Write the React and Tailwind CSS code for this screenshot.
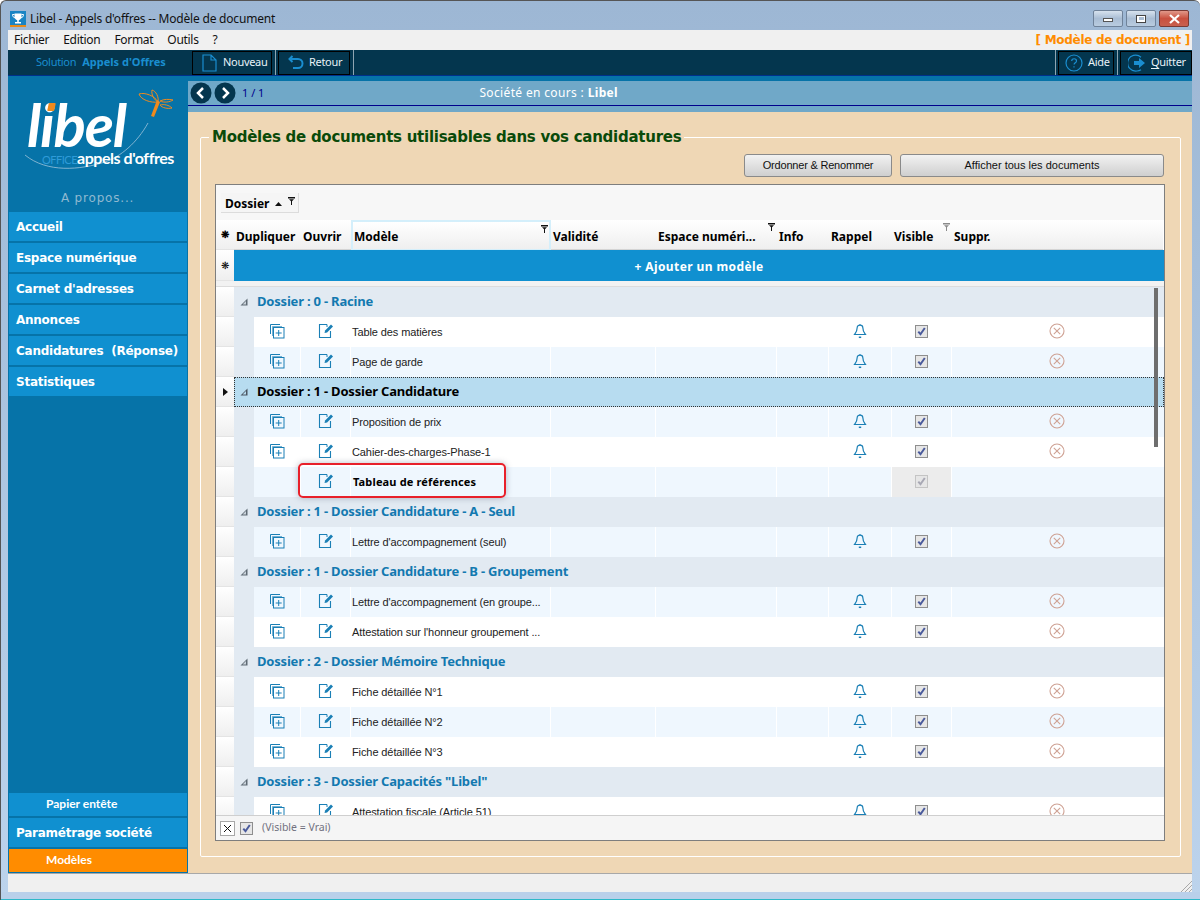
import React from "react";

const blue = "#1a7fb5";

const DupIcon = () => (
  <svg width="16" height="16" viewBox="0 0 16 16" fill="none" stroke={blue} strokeWidth="1">
    <path d="M1.500 11V1.500H11" />
    <path d="M3.500 13V3.500H13" opacity=".6" />
    <rect x="4.500" y="4.500" width="10.500" height="10.500" fill="#fff" fillOpacity="0" />
    <path d="M9.700 7v6M6.700 10h6" />
  </svg>
);
const EditIcon = () => (
  <svg width="16" height="16" viewBox="0 0 16 16" fill="none">
    <path d="M9 1.500H1.500v13h11V8" stroke={blue} strokeWidth="1.100" />
    <path d="M9 1.500v2.500" stroke={blue} strokeWidth="1" />
    <path d="M6.500 10l.6-2.600L13 1.500l2 2-5.900 5.900z" fill={blue} />
  </svg>
);
const BellIcon = () => (
  <svg width="14" height="16" viewBox="0 0 14 16" fill="none" stroke={blue} strokeWidth="1.200">
    <path d="M7 1v1.200M4.200 4.500C4.200 3 5.400 2.200 7 2.200s2.800.8 2.800 2.300c0 3.400.8 4.800 2.600 7H1.600c1.800-2.200 2.600-3.600 2.600-7z" />
    <path d="M5.800 14.300h2.400" strokeWidth="1.500" />
  </svg>
);
const Check = ({ dim }) => (
  <span className={`flex h-[13px] w-[13px] items-center justify-center border bg-[#e6e6e6] ${dim ? "border-[#c4c4c4]" : "border-[#8e8e8e]"}`}>
    <svg width="9" height="9" viewBox="0 0 9 9" fill="none" stroke={dim ? "#a8a8b4" : "#4a5a9c"} strokeWidth="2">
      <path d="M1.300 4.600l2.200 2.600L7.800 1" />
    </svg>
  </span>
);
const XCircle = () => (
  <svg width="16" height="16" viewBox="0 0 16 16" fill="none" stroke="#cfa294" strokeWidth="1.100">
    <circle cx="8" cy="8" r="7" />
    <path d="M4.800 4.800l6.400 6.400M11.200 4.800l-6.400 6.400" />
  </svg>
);
const Funnel = ({ gray }) => (
  <svg width="7" height="8" viewBox="0 0 7 8" fill={gray ? "#8a8a8a" : "#111"}>
    <path d="M0 0h7v1.500H0zM1 2.200h5L4 4.300V8H3V4.300z" />
  </svg>
);
const Collapse = ({ dark }) => (
  <svg width="8" height="8" viewBox="0 0 8 8">
    <path d="M7.500 0.500v7H.5z" fill={dark ? "#4a5560" : "#5f6a74"} />
    <path d="M6 3v3.400H2.600z" fill={dark ? "#b7dcf0" : "#c9d2da"} />
  </svg>
);

const cols = "grid grid-cols-[47px_50px_200px_105px_121px_52px_63px_60px_211px]";

const Indicator = ({ children, h = "h-[30px]" }) => (
  <div className={`flex w-[18px] shrink-0 items-center justify-center border-b border-[#e4e4e4] bg-linear-to-b from-white to-[#efefef] text-[10px] text-black ${h}`}>
    {children}
  </div>
);

const GroupRow = ({ label, selected }) => (
  <div className="flex h-[30px]">
    <Indicator>
      {selected && (
        <svg width="5" height="8" viewBox="0 0 5 8"><path d="M0 0l5 4-5 4z" fill="#111" /></svg>
      )}
    </Indicator>
    <div
      className={`flex flex-1 items-center gap-[9px] font-['Noto_Sans',sans-serif] text-[13px] font-bold tracking-[-0.2px] ${
        selected
          ? "border border-dotted border-[#333] bg-[#b7dcf0] pl-[5px] text-black"
          : "bg-[#e2eaf2] pl-[6px] text-[#1379b0]"
      }`}
    >
      <Collapse dark={selected} />
      <span>{label}</span>
    </div>
  </div>
);

const DataRow = ({ label, alt, bold, noDup, dim, noBell }) => (
  <div className="flex h-[30px]">
    <Indicator />
    <div className="w-[20px] shrink-0 bg-[#e2eaf2]" />
    <div className={`${cols} flex-1 font-['Liberation_Sans',sans-serif] text-[11px] tracking-[-0.1px] text-[#222] ${alt ? "bg-[#eff7fe]" : "bg-white"}`}>
      <div className="flex items-center justify-center border-r border-white pb-[2px]">{!noDup && <DupIcon />}</div>
      <div className="flex items-center justify-center border-r border-white pb-[2px]"><EditIcon /></div>
      <div className={`flex items-center overflow-hidden whitespace-nowrap border-r border-white ${bold ? "pl-[2px] font-['Noto_Sans',sans-serif] font-bold tracking-[0.15px] text-black" : "pl-[1px]"}`}>{label}</div>
      <div className="border-r border-white" />
      <div className="border-r border-white" />
      <div className="border-r border-white" />
      <div className="flex items-center justify-center border-r border-white pb-[2px]">{!noBell && <BellIcon />}</div>
      <div className={`flex items-center justify-center border-r border-white pb-[1px] ${dim ? "bg-[#ececec]" : ""}`}><Check dim={dim} /></div>
      <div className="flex items-center justify-start pb-[3px] pl-[97px]">{!noBell && <XCircle />}</div>
    </div>
  </div>
);

const HeadCell = ({ children, funnel, gray, active }) => (
  <div className={`relative flex items-center border-b border-[#d4d4d4] bg-linear-to-b from-white to-[#efefef] ${active ? "border-2 border-[#d4effb] pl-[1px] pt-[3px]" : "pl-[2px] pt-[5px]"}`}>
    {children}
    {funnel && (
      <span className={`absolute top-[3px] ${active ? "right-[1px]" : "right-[2px]"}`}><Funnel gray={gray} /></span>
    )}
  </div>
);

const NavItem = ({ children }) => (
  <div className="flex h-[29px] items-center whitespace-pre bg-[#1090d0] pl-[7px] font-['DejaVu_Sans',sans-serif] text-[12px] font-bold tracking-[-0.25px] text-white">
    {children}
  </div>
);

const ToolBtn = ({ icon, children, w, pl = "pl-[8px]", gap = "gap-[6px]" }) => (
  <div className={`flex h-[24px] items-center border border-black bg-[#04364e] font-['Noto_Sans',sans-serif] text-[11px] tracking-[-0.3px] text-[#e8f2f8] ${pl} ${gap} ${w}`}>
    {icon}
    <span>{children}</span>
  </div>
);

const Sep = () => <div className="ml-[1px] h-[25px] w-px bg-[#8fa5b2]" />;

const WinBtn = ({ children, close }) => (
  <div className={`flex h-[17px] w-[30px] items-center justify-center rounded-[2px] border ${close ? "border-[#7a3a34] bg-linear-to-b from-[#e0988a] via-[#c9503f] to-[#c8604f]" : "border-[#6f8299] bg-linear-to-b from-[#d7e2ee] via-[#a9bdd4] to-[#b9cce0]"}`}>
    {children}
  </div>
);

const Logo = () => (
  <div className="relative h-[110px] shrink-0">
    <div className="absolute left-[18px] top-[24px] font-['Lato',sans-serif] text-[60px] font-bold italic leading-[48px] tracking-[-1.200px] text-white">libel</div>
    <div className="absolute left-[39px] top-[27px] h-[8px] w-[7px] -skew-x-12 rounded-[1px] bg-[#ef8a1d]" />
    <svg className="absolute left-[16px] top-[5px]" width="170" height="90" viewBox="0 0 170 90" fill="none">
      <g stroke="#ef8a1d" strokeWidth="1">
        <path d="M114 13c6-2 16 2 19 8-7 1-17-2-19-8z" />
        <path d="M127 9c4 1 7 7 6 12-4-2-7-8-6-12z" />
        <path d="M135 20c4-2 9-2 13-1-3 2-9 3-13 1z" />
        <path d="M135 24c4-1 9 0 12 3-4 1-10 0-12-3z" />
      </g>
      <path d="M132 19l3 2-6 15-3-1z" fill="#ef8a1d" />
      <path d="M123 42C112 62 95 76 80 81 55 89 22 92 0 74" stroke="#9fc4da" strokeWidth=".8" />
    </svg>
    <div className="absolute left-[33px] top-[74px] flex items-baseline whitespace-nowrap font-['Lato',sans-serif] leading-[16px]">
      <span className="text-[11px] tracking-[-0.500px] text-[#2f9bd8]">OFFICE</span>
      <span className="text-[16px] font-bold tracking-[-0.45px] text-white">appels d'offres</span>
    </div>
  </div>
);

export default function App() {
  return (
    <div className="flex h-[900px] w-[1200px] flex-col overflow-hidden rounded-t-[6px] border-l border-t border-[#555] bg-linear-to-b from-[#9db7d4] to-[#bcd3ec] font-['Noto_Sans',sans-serif]">
      {/* title bar */}
      <div className="flex h-[29px] shrink-0 items-center pl-[9px] pr-[11px] pt-[6px]">
        <svg width="16" height="16" viewBox="0 0 16 16" className="mr-[4px]">
          <rect width="16" height="16" fill="#1a84c4" />
          <rect y="14" width="16" height="2" fill="#e88a1a" />
          <path d="M4.500 2.500h7v3c0 2-1.500 3.500-2.700 3.800V11H11v1.500H5V11h2.200V9.300C6 9 4.500 7.500 4.500 5.500z" fill="#fff" />
          <path d="M4.500 3.500H2.500c0 2 1 3 2.500 3.300M11.500 3.500h2c0 2-1 3-2.500 3.300" fill="none" stroke="#fff" />
        </svg>
        <span className="text-[12px] tracking-[-0.2px] text-[#111]">Libel - Appels d'offres -- Modèle de document</span>
        <div className="ml-auto flex gap-[3px]">
          <WinBtn><span className="mt-[3px] h-[4px] w-[10px] border border-[#555] bg-white" /></WinBtn>
          <WinBtn><span className="flex h-[8px] w-[10px] items-center justify-center border-[1.500px] border-[#444] bg-white"><span className="h-[3px] w-[5px] bg-[#a9bdd4]" /></span></WinBtn>
          <WinBtn close>
            <svg width="11" height="10" viewBox="0 0 11 10" stroke="#fff" strokeWidth="2.200"><path d="M1 1l9 8M10 1l-9 8" /></svg>
          </WinBtn>
        </div>
      </div>

      <div className="ml-[7px] mr-[8px] flex min-h-0 flex-1 flex-col">
        {/* menu */}
        <div className="flex h-[20px] shrink-0 items-center gap-[14px] bg-[#f0f0f0] pl-[6px] pr-[2px] text-[12px] tracking-[-0.3px] text-[#111]">
          <span>Fichier</span><span>Edition</span><span>Format</span><span>Outils</span><span>?</span>
          <span className="ml-auto font-['DejaVu_Sans',sans-serif] text-[12px] font-bold tracking-[-0.3px] text-[#ff8c00]">[ Modèle de document ]</span>
        </div>

        {/* toolbar */}
        <div className="flex h-[26px] shrink-0 items-center gap-[2px] border-b border-[#00308c] bg-[#04364e]">
          <div className="flex w-[182px] items-center gap-[6px] pl-[28px] text-[11px] text-[#1a8ed0]">
            <span className="tracking-[-0.300px]">Solution</span>
            <span className="font-bold">Appels d'Offres</span>
          </div>
          <ToolBtn w="w-[80px]" pl="pl-[9px]" icon={
            <svg width="15" height="18" viewBox="0 0 15 18" fill="none" stroke="#1a8ed0" strokeWidth="1.200"><path d="M1 1h8l5 5v11H1zM9 1v5h5" /></svg>
          }>Nouveau</ToolBtn>
          <Sep />
          <ToolBtn w="w-[72px]" pl="pl-[9px]" gap="gap-[5px]" icon={
            <svg width="16" height="15" viewBox="0 0 16 15" fill="none" stroke="#1a8ed0" strokeWidth="2"><path d="M2 4h8a4.500 4.500 0 010 9H5" /><path d="M4.500 1L1.500 4l3 3" /></svg>
          }>Retour</ToolBtn>
          <Sep />
          <div className="ml-auto flex items-center gap-[2px]">
            <Sep />
            <ToolBtn w="w-[56px]" pl="pl-[6px]" gap="gap-[5px]" icon={
              <svg width="18" height="18" viewBox="0 0 18 18" fill="none" stroke="#1a8ed0" strokeWidth="1.200">
                <circle cx="9" cy="9" r="8" />
                <path d="M6.700 7c0-3 4.800-3 4.800 0 0 1.800-2.400 1.800-2.400 3.500M9 12.300v1.300" />
              </svg>
            }>Aide</ToolBtn>
            <Sep />
            <ToolBtn w="w-[72px]" pl="pl-[7px]" gap="gap-[5px]" icon={
              <svg width="18" height="18" viewBox="0 0 18 18" fill="none">
                <path d="M13 3.200A8 8 0 109 17a8 8 0 004-1.200" stroke="#1a8ed0" strokeWidth="1.200" />
                <path d="M6 7h5V4l6 5-6 5v-3H6z" fill="#1a8ed0" />
              </svg>
            }><span className="underline decoration-[0.500px] underline-offset-2">Q</span>uitter</ToolBtn>
          </div>
        </div>

        <div className="flex min-h-0 flex-1">
          {/* sidebar */}
          <div className="flex w-[180px] shrink-0 flex-col gap-[2px] bg-[#0673a8] pb-[1px] pl-[1px] pr-[1px]">
            <Logo />
            <div className="mb-[3px] h-[19px] shrink-0 pl-[52px] pt-[1px] font-['DejaVu_Sans',sans-serif] text-[12px] leading-[18px] tracking-[0.8px] text-[#8fb9d0]">A propos...</div>
            <NavItem>Accueil</NavItem>
            <NavItem>Espace numérique</NavItem>
            <NavItem>Carnet d'adresses</NavItem>
            <NavItem>Annonces</NavItem>
            <NavItem>Candidatures  (Réponse)</NavItem>
            <NavItem>Statistiques</NavItem>
            <div className="mt-auto flex h-[23px] items-center bg-[#1090d0] pb-[1px] pl-[37px] font-['Lato',sans-serif] text-[12px] font-bold text-white">Papier entête</div>
            <NavItem>Paramétrage société</NavItem>
            <div className="flex h-[23px] items-center bg-[#ff8c00] pb-[1px] pl-[37px] font-['Lato',sans-serif] text-[12px] font-bold text-white">Modèles</div>
          </div>

          {/* main */}
          <div className="flex min-w-0 flex-1 flex-col">
            <div className="h-[5px] shrink-0 bg-[#0673a8]" />
            <div className="flex h-[31px] shrink-0 items-start bg-[#70a8c8]">
              <div className="flex h-[25px] w-full items-center border-b border-[#00008c] pl-[2px]">
                <svg width="22" height="22" viewBox="0 0 22 22"><circle cx="11" cy="11" r="10.500" fill="#04364e" /><path d="M13 6l-5 5 5 5" fill="none" stroke="#fff" strokeWidth="2.500" /></svg>
                <svg className="ml-[2px]" width="22" height="22" viewBox="0 0 22 22"><circle cx="11" cy="11" r="10.500" fill="#04364e" /><path d="M9 6l5 5-5 5" fill="none" stroke="#fff" strokeWidth="2.500" /></svg>
                <span className="ml-[6px] text-[11px] text-[#00008c]">1 / 1</span>
                <span className="ml-[215px] text-[12px] tracking-[0.35px] text-white">Société en cours : <b>Libel</b></span>
              </div>
            </div>

            <div className="flex min-h-0 flex-1 flex-col bg-[#efd7b5] pb-[16px] pl-[12px] pr-[11px] pt-[25px]">
              <div className="relative flex min-h-0 flex-1 flex-col rounded-[2px] border border-white pb-[15px] pl-[14px] pr-[15px] pt-[16px]">
                <div className="absolute left-[8px] top-[-11px] bg-[#efd7b5] px-[3px] font-['DejaVu_Sans',sans-serif] text-[15px] font-bold leading-[20px] tracking-[-0.26px] text-[#0a4a0a]">
                  Modèles de documents utilisables dans vos candidatures
                </div>
                <div className="flex h-[23px] shrink-0 justify-end gap-[8px] pr-[1px] font-['Liberation_Sans',sans-serif] text-[11px] text-[#111]">
                  <div className="flex w-[148px] items-center justify-center rounded-[3px] border border-[#8a8a8a] bg-linear-to-b from-[#f2f2f2] to-[#cfcfcf] tracking-[-0.2px]">Ordonner &amp; Renommer</div>
                  <div className="flex w-[264px] items-center justify-center rounded-[3px] border border-[#8a8a8a] bg-linear-to-b from-[#f2f2f2] to-[#cfcfcf]">Afficher tous les documents</div>
                </div>

                {/* table */}
                <div className="relative mt-[7px] flex min-h-0 flex-1 flex-col overflow-hidden border border-[#7e7e7e] bg-white">
                  <div className="flex h-[35px] shrink-0 items-start bg-[#f7f7f7] pl-[5px] pt-[8px]">
                    <div className="flex h-[20px] w-[78px] items-center gap-[6px] border-b border-r border-[#dcdcdc] bg-[#f5f5f5] pl-[4px] pt-[2px] text-[12px] font-bold text-black">
                      Dossier
                      <svg width="7" height="4" viewBox="0 0 7 4"><path d="M3.500 0l3.500 4H0z" fill="#111" /></svg>
                      <span className="mb-[5px]"><Funnel /></span>
                    </div>
                  </div>
                  {/* header */}
                  <div className="flex h-[30px] shrink-0 text-[12px] font-bold text-black">
                    <Indicator h="h-[30px]">❋</Indicator>
                    <div className="grid flex-1 grid-cols-[67px_50px_200px_105px_121px_52px_63px_60px_211px]">
                      <HeadCell>Dupliquer</HeadCell>
                      <HeadCell>Ouvrir</HeadCell>
                      <HeadCell funnel active>Modèle</HeadCell>
                      <HeadCell>Validité</HeadCell>
                      <HeadCell funnel>Espace numéri...</HeadCell>
                      <HeadCell>Info</HeadCell>
                      <HeadCell>Rappel</HeadCell>
                      <HeadCell funnel gray>Visible</HeadCell>
                      <HeadCell>Suppr.</HeadCell>
                    </div>
                  </div>
                  {/* add row */}
                  <div className="flex h-[31px] shrink-0">
                    <Indicator h="h-[31px]"><span className="text-black">❋</span></Indicator>
                    <div className="flex flex-1 items-center justify-center bg-[#1090d0] pt-[2px] text-[12px] font-bold tracking-[0.4px] text-white">+ Ajouter un modèle</div>
                  </div>
                  <div className="h-[6px] shrink-0 border-b border-[#dcdcdc] bg-[#f2f2f2]" />

                  {/* rows */}
                  <div className="relative min-h-0 flex-1 overflow-hidden">
                    <GroupRow label="Dossier : 0 - Racine" />
                    <DataRow label="Table des matières" />
                    <DataRow label="Page de garde" alt />
                    <GroupRow label="Dossier : 1 - Dossier Candidature" selected />
                    <DataRow label="Proposition de prix" alt />
                    <DataRow label="Cahier-des-charges-Phase-1" />
                    <DataRow label="Tableau de références" alt bold noDup dim noBell />
                    <GroupRow label="Dossier : 1 - Dossier Candidature - A - Seul" />
                    <DataRow label="Lettre d'accompagnement (seul)" alt />
                    <GroupRow label="Dossier : 1 - Dossier Candidature - B - Groupement" />
                    <DataRow label="Lettre d'accompagnement (en groupe..." alt />
                    <DataRow label="Attestation sur l'honneur groupement ..." />
                    <GroupRow label="Dossier : 2 - Dossier Mémoire Technique" />
                    <DataRow label="Fiche détaillée N°1" />
                    <DataRow label="Fiche détaillée N°2" alt />
                    <DataRow label="Fiche détaillée N°3" />
                    <GroupRow label='Dossier : 3 - Dossier Capacités "Libel"' />
                    <DataRow label="Attestation fiscale (Article 51)" />
                    {/* scrollbar */}
                    <div className="absolute left-[938px] top-[1px] h-[159px] w-[4px] bg-[#6e6e6e]" />
                    {/* red highlight */}
                    <div className="absolute left-[82px] top-[176px] h-[35px] w-[208px] rounded-[5px] border-2 border-[#e8202a] shadow-[0_0_6px_rgba(60,70,90,0.35)]" />
                  </div>

                  {/* footer */}
                  <div className="flex h-[25px] shrink-0 items-center border-t border-[#cfcfcf] bg-[#f5f5f5] pl-[4px] text-[10.5px] text-[#71717f]">
                    <span className="flex h-[15px] w-[15px] items-center justify-center border border-[#a8a8a8] bg-white">
                      <svg width="9" height="9" viewBox="0 0 9 9" stroke="#111"><path d="M1 1l7 7M8 1l-7 7" /></svg>
                    </span>
                    <span className="ml-[5px]"><Check /></span>
                    <span className="ml-[9px]">(Visible = Vrai)</span>
                  </div>
                </div>
              </div>
            </div>
          </div>
        </div>

        {/* status bar */}
        <div className="relative h-[19px] shrink-0 border-t border-[#a8a8a8] bg-[#f0f0f0]">
          <svg className="absolute bottom-0 right-0" width="12" height="12" viewBox="0 0 12 12" stroke="#a8a8a8">
            <path d="M12 1L1 12M12 5L5 12M12 9l-3 3" />
          </svg>
        </div>
      </div>
      <div className="h-[8px] shrink-0 border-b border-[#2fb8c8] bg-[#b9d0ea]" />
    </div>
  );
}
